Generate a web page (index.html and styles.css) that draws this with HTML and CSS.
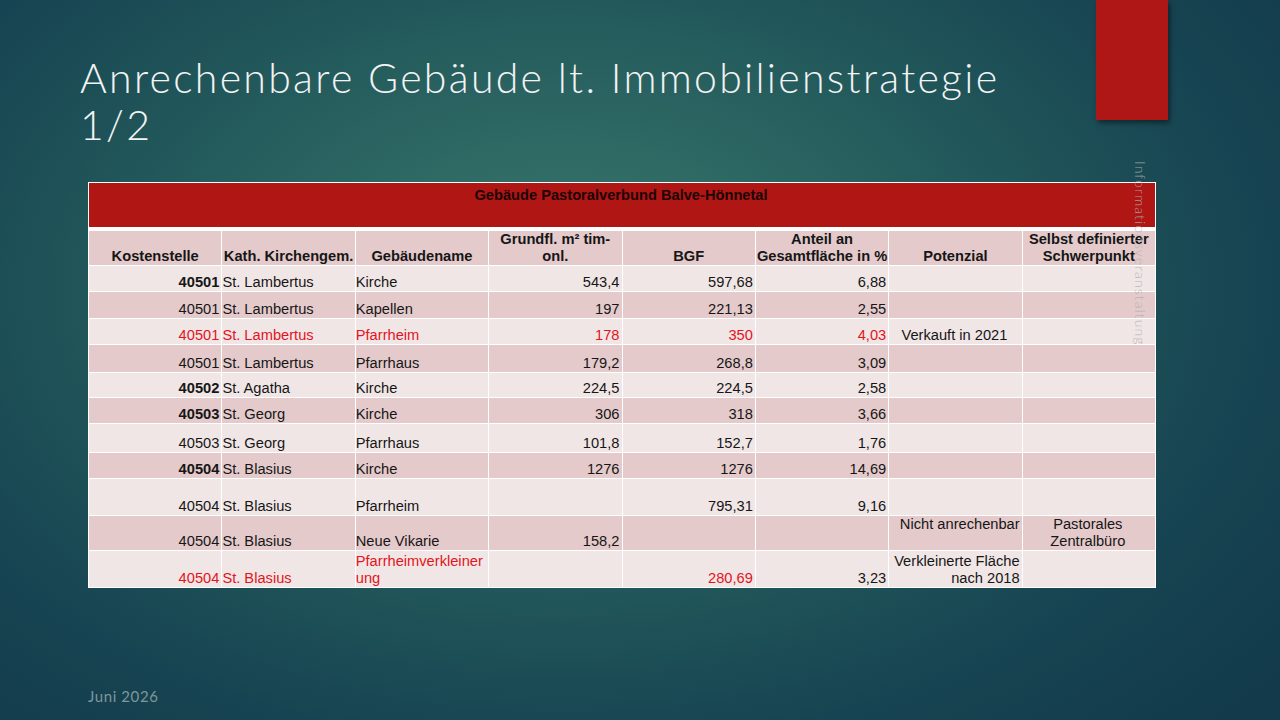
FILE: index.html
```html
<!DOCTYPE html>
<html lang="de">
<head>
<meta charset="utf-8">
<title>Anrechenbare Gebäude lt. Immobilienstrategie 1/2</title>
<link rel="stylesheet" href="styles.css">
</head>
<body>
<div class="slide">
  <div class="accent"></div>
  <h1 class="title">Anrechenbare Gebäude lt. Immobilienstrategie<br>1/2</h1>
  <div class="table-wrap">
    <table class="data">
      <tr class="caption-row">
        <td colspan="8" class="caption">Gebäude Pastoralverbund Balve-Hönnetal</td>
      </tr>
      <tr class="head dark">
        <th>Kostenstelle</th>
        <th>Kath. Kirchengem.</th>
        <th>Gebäudename</th>
        <th>Grundfl. m² tim-<br>onl.</th>
        <th>BGF</th>
        <th>Anteil an<br>Gesamtfläche in %</th>
        <th>Potenzial</th>
        <th>Selbst definierter<br>Schwerpunkt</th>
      </tr>
      <tr class="light h26">
        <td class="num b">40501</td><td>St. Lambertus</td><td>Kirche</td><td class="num">543,4</td><td class="num">597,68</td><td class="num">6,88</td><td></td><td></td>
      </tr>
      <tr class="dark h27">
        <td class="num">40501</td><td>St. Lambertus</td><td>Kapellen</td><td class="num">197</td><td class="num">221,13</td><td class="num">2,55</td><td></td><td></td>
      </tr>
      <tr class="light h26 red">
        <td class="num">40501</td><td>St. Lambertus</td><td>Pfarrheim</td><td class="num">178</td><td class="num">350</td><td class="num">4,03</td><td class="mid ink">Verkauft in 2021</td><td></td>
      </tr>
      <tr class="dark h28">
        <td class="num">40501</td><td>St. Lambertus</td><td>Pfarrhaus</td><td class="num">179,2</td><td class="num">268,8</td><td class="num">3,09</td><td></td><td></td>
      </tr>
      <tr class="light h25">
        <td class="num b">40502</td><td>St. Agatha</td><td>Kirche</td><td class="num">224,5</td><td class="num">224,5</td><td class="num">2,58</td><td></td><td></td>
      </tr>
      <tr class="dark h26">
        <td class="num b">40503</td><td>St. Georg</td><td>Kirche</td><td class="num">306</td><td class="num">318</td><td class="num">3,66</td><td></td><td></td>
      </tr>
      <tr class="light h29">
        <td class="num">40503</td><td>St. Georg</td><td>Pfarrhaus</td><td class="num">101,8</td><td class="num">152,7</td><td class="num">1,76</td><td></td><td></td>
      </tr>
      <tr class="dark h26">
        <td class="num b">40504</td><td>St. Blasius</td><td>Kirche</td><td class="num">1276</td><td class="num">1276</td><td class="num">14,69</td><td></td><td></td>
      </tr>
      <tr class="light h37">
        <td class="num">40504</td><td>St. Blasius</td><td>Pfarrheim</td><td class="num"></td><td class="num">795,31</td><td class="num">9,16</td><td></td><td></td>
      </tr>
      <tr class="dark h35">
        <td class="num">40504</td><td>St. Blasius</td><td>Neue Vikarie</td><td class="num">158,2</td><td class="num"></td><td class="num"></td><td class="num top">Nicht anrechenbar</td><td class="mid top">Pastorales<br>Zentralbüro</td>
      </tr>
      <tr class="light h37">
        <td class="num red">40504</td><td class="red">St. Blasius</td><td class="red brk">Pfarrheimverkleinerung</td><td class="num"></td><td class="num red">280,69</td><td class="num">3,23</td><td class="num">Verkleinerte Fläche<br>nach 2018</td><td></td>
      </tr>
    </table>
  </div>
  <div class="side-label">Informationsveranstaltung</div>
  <div class="footer">Juni 2026</div>
</div>
</body>
</html>
```
FILE: styles.css
```css
html, body {
  margin: 0;
  padding: 0;
  background: #123a4a;
}

.slide {
  position: relative;
  width: 1280px;
  height: 720px;
  overflow: hidden;
  display: flex;
  flex-direction: column;
  background:
    radial-gradient(ellipse 72% 85% at 44% 40%, #3a7770 0%, #2e6964 24%, #205559 52%, #174452 76%, #123a4a 100%);
}

.accent {
  position: absolute;
  left: 1096px;
  top: 0;
  width: 72px;
  height: 120px;
  background: #ae1716;
  box-shadow: 2px 3px 5px rgba(0, 0, 0, 0.45);
}

.title {
  margin: 0;
  padding: 54px 0 0 80px;
  font-family: "Lato", "Open Sans", sans-serif;
  font-weight: 300;
  font-size: 41px;
  line-height: 47px;
  letter-spacing: 2.3px;
  color: #f3f3f3;
}

.table-wrap {
  margin: 34px 0 0 88px;
}

.data {
  width: 1068px;
  table-layout: fixed;
  border-collapse: collapse;
  font-family: "Liberation Sans", Arial, sans-serif;
  font-size: 14.67px;
  line-height: 17px;
  color: #161616;
}

.data td,
.data th {
  border: 1px solid #ffffff;
  padding: 0 2px 0 0;
  vertical-align: bottom;
  text-align: left;
  white-space: nowrap;
  overflow: visible;
}

.caption-row td.caption {
  background: #b01614;
  color: #1c0505;
  font-weight: bold;
  font-size: 14.67px;
  text-align: center;
  vertical-align: top;
  height: 40px;
  padding-top: 4px;
  border-bottom: 4px solid #ffffff;
}

.head th {
  font-weight: bold;
  text-align: center;
  height: 34px;
  padding: 0 1px;
}

.dark td,
.dark th {
  background: #e4cacb;
}

.light td {
  background: #f1e6e6;
}

.data td.num {
  text-align: right;
}

.data td.mid {
  text-align: center;
}

.data td.top {
  vertical-align: top;
}

.b {
  font-weight: bold;
}

.red td,
.data td.red {
  color: #e3141c;
}

.data td.ink {
  color: #161616;
}

.data td.brk {
  white-space: normal;
  word-break: break-all;
}

.h25 td { height: 24px; }
.h26 td { height: 25px; }
.h27 td { height: 26px; }
.h28 td { height: 27px; }
.h29 td { height: 28px; }
.h35 td { height: 34px; }
.h37 td { height: 36px; }

.side-label {
  position: absolute;
  left: 1132px;
  top: 161px;
  writing-mode: vertical-rl;
  font-family: "Lato", "Open Sans", sans-serif;
  font-weight: 300;
  font-size: 14px;
  letter-spacing: 1.1px;
  color: rgba(175, 175, 175, 0.85);
}

.footer {
  margin-top: auto;
  padding: 0 0 15px 88px;
  font-family: "Lato", "Open Sans", sans-serif;
  font-size: 15px;
  line-height: 17px;
  letter-spacing: 0.6px;
  color: #7d979d;
}
```
